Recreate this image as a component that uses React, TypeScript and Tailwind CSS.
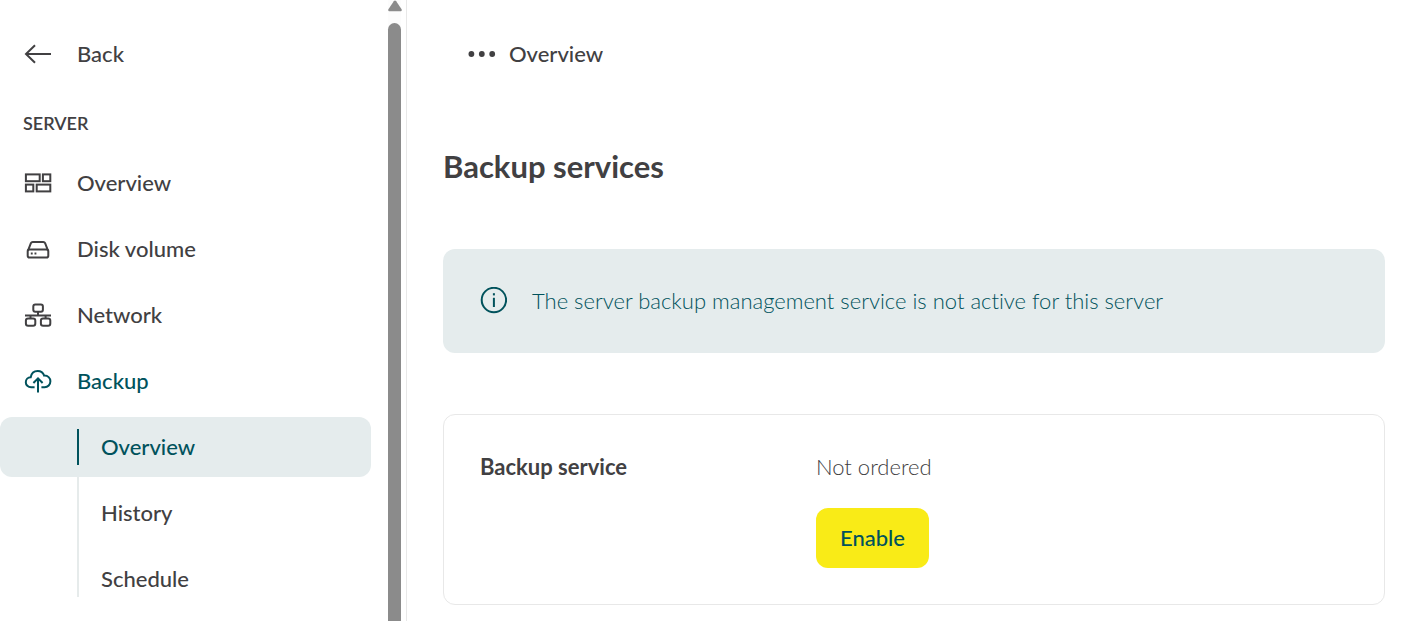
import React from 'react'
import clsx from 'clsx'

interface NavItem {
  label: string
  icon: React.ReactNode
  active?: boolean
}

interface IconProps {
  children: React.ReactNode
}

function Icon({ children }: IconProps) {
  return (
    <svg
      viewBox="0 0 28 28"
      className="h-7 w-7 shrink-0"
      fill="none"
      stroke="currentColor"
      strokeWidth="2"
      aria-hidden="true"
    >
      {children}
    </svg>
  )
}

const navItems: NavItem[] = [
  {
    label: 'Overview',
    icon: (
      <Icon>
        <rect x="1.9" y="5.4" width="13.8" height="6.8" />
        <rect x="18.9" y="5.4" width="7.4" height="6.8" />
        <rect x="1.9" y="15.6" width="7.4" height="6.8" />
        <rect x="12.7" y="15.6" width="13.6" height="6.8" />
      </Icon>
    ),
  },
  {
    label: 'Disk volume',
    icon: (
      <Icon>
        <path d="M3.9 15.8 6.9 8.2Q7.4 7 8.7 7H19.3Q20.6 7 21.1 8.2L24.1 15.8" />
        <rect x="3.7" y="14.4" width="20.6" height="8.2" rx="1.8" />
        <path d="M6.8 18.5h1.9M10.5 18.5h1.9" />
      </Icon>
    ),
  },
  {
    label: 'Network',
    icon: (
      <Icon>
        <rect x="9.3" y="3.5" width="9.6" height="7.2" rx="2" />
        <path d="M1 14.4H27M14 10.7V14.4M6.5 14.4v2.8M21.6 14.4v2.8" />
        <rect x="1.9" y="17.4" width="9.4" height="7.4" rx="2.2" />
        <rect x="16.9" y="17.4" width="9.4" height="7.4" rx="2.2" />
      </Icon>
    ),
  },
  {
    label: 'Backup',
    active: true,
    icon: (
      <Icon>
        <path d="M10.6 20.2H7.2C4 20.2 1.8 17.9 1.8 15.2 1.8 12.4 3.9 10.4 6.7 10.3 7.4 6.4 10.2 4 13.7 4 17 4 19.2 5.9 20.2 8.6 23.8 8.4 26.4 11 26.4 14.3 26.4 17.6 23.9 20.2 20.6 20.2H17.4" />
        <path d="M14 25.4V11.6M9.4 16 14 11.4 18.6 16" />
      </Icon>
    ),
  },
]

const backupPages = ['Overview', 'History', 'Schedule']

function Sidebar() {
  const currentPage = 'Overview'

  return (
    <aside className="flex w-[407px] shrink-0 border-r border-[#e8e8e8]">
      <nav aria-label="Server" className="min-w-0 flex-1 pt-6 pb-3">
        <a href="#back" className="flex h-[60px] items-center gap-[25px] pl-6">
          <Icon>
            <path d="M27 14H2M11 5.2 2 14 11 22.8" />
          </Icon>
          Back
        </a>
        <h2 className="flex h-[69px] items-center pt-2 pl-[23px] text-lg font-semibold">SERVER</h2>
        <ul className="flex flex-col gap-[6px]">
          {navItems.map((item) => (
            <li key={item.label}>
              <a
                href={`#${item.label}`}
                className={clsx('flex h-[60px] items-center gap-[25px] pl-6', item.active && 'text-[#00525c]')}
              >
                {item.icon}
                {item.label}
              </a>
            </li>
          ))}
        </ul>
        <ul className="relative mt-[6px] flex flex-col gap-[6px]">
          <li aria-hidden="true" className="absolute top-3 bottom-3 left-[77px] w-[2px] bg-[#e6ebeb]" />
          {backupPages.map((page) => (
            <li key={page} className="relative">
              <a
                href={`#backup-${page}`}
                aria-current={page === currentPage ? 'page' : undefined}
                className={clsx(
                  'flex h-[60px] items-center rounded-xl pl-[77px]',
                  page === currentPage && 'bg-[#e5eced] text-[#00525c]',
                )}
              >
                <span
                  className={clsx(
                    'flex h-9 items-center border-l-2 pl-[22px]',
                    page === currentPage ? 'border-[#00525c]' : 'border-transparent',
                  )}
                >
                  {page}
                </span>
              </a>
            </li>
          ))}
        </ul>
      </nav>
      <div aria-hidden="true" className="mr-[5px] ml-[17px] flex w-[13px] flex-col items-center bg-[#fcfcfc]">
        <svg viewBox="0 0 14 12" className="h-3 w-[14px] shrink-0" fill="#8b8b8b">
          <path d="M5.8 1.2Q7 0 8.2 1.2L13.6 9.2Q14.2 11.2 12.6 11.2H1.4Q-.2 11.2.4 9.2Z" />
        </svg>
        <div className="mt-[11px] w-full flex-1 rounded-t-full bg-[#8b8b8b]" />
      </div>
    </aside>
  )
}

export default function App() {
  return (
    <div className="flex min-h-screen bg-white font-['Lato','Open_Sans',sans-serif] text-[22px] leading-7 font-medium text-[#414042] [font-variant-ligatures:none]">
      <Sidebar />
      <main className="min-w-0 flex-1 pt-10 pr-[38px] pb-4 pl-9">
        <nav aria-label="Breadcrumb" className="flex items-center gap-3 pl-6">
          <button type="button" aria-label="Show parent pages">
            <svg viewBox="0 0 30 28" className="h-7 w-[30px]" fill="currentColor">
              <circle cx="4.4" cy="14" r="2.9" />
              <circle cx="14.8" cy="14" r="2.9" />
              <circle cx="25.2" cy="14" r="2.9" />
            </svg>
          </button>
          <span>Overview</span>
        </nav>

        <h1 className="mt-[78px] text-[31px] leading-10 font-bold">Backup services</h1>

        <div
          role="status"
          className="mt-[63px] flex min-h-[104px] items-center gap-[25px] rounded-xl bg-[#e5eced] px-9 font-light text-[#00525c]"
        >
          <Icon>
            <circle cx="14.9" cy="13" r="12.2" />
            <path d="M14.9 10.8v9.2" />
            <path d="M14.9 6.2v2.2" />
          </Icon>
          The server backup management service is not active for this server
        </div>

        <section className="mt-[61px] flex rounded-xl border border-[#e8e8e8] px-9 pt-[38px] pb-9">
          <h2 className="w-[336px] shrink-0 font-bold">Backup service</h2>
          <div>
            <p className="font-light">Not ordered</p>
            <button
              type="button"
              className="mt-[27px] h-[60px] rounded-xl bg-[#f9eb17] px-6 text-[#00525c] hover:bg-[#efe000]"
            >
              Enable
            </button>
          </div>
        </section>
      </main>
    </div>
  )
}
